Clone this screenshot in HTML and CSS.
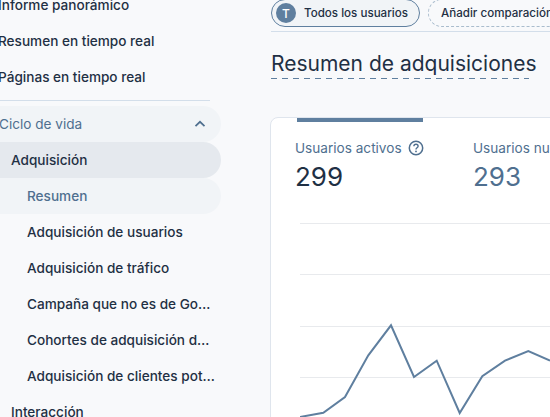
FILE: index.html
```html
<!DOCTYPE html>
<html lang="es">
<head>
<meta charset="utf-8">
<title>Resumen de adquisiciones</title>
<link rel="stylesheet" href="styles.css">
</head>
<body>
<div class="app">
  <nav class="sidebar">
    <div class="item top">Informe panorámico</div>
    <div class="item top">Resumen en tiempo real</div>
    <div class="item top">Páginas en tiempo real</div>
    <div class="divider"></div>
    <div class="item section"><span>Ciclo de vida</span>
      <svg class="chev" width="12" height="8" viewBox="0 0 12 8"><path d="M1.5 6.2 6 1.8l4.5 4.4" fill="none" stroke="#4f6f8f" stroke-width="1.7"/></svg>
    </div>
    <div class="item group active">Adquisición</div>
    <div class="item sub current">Resumen</div>
    <div class="item sub">Adquisición de usuarios</div>
    <div class="item sub">Adquisición de tráfico</div>
    <div class="item sub">Campaña que no es de Go…</div>
    <div class="item sub">Cohortes de adquisición d…</div>
    <div class="item sub">Adquisición de clientes pot…</div>
    <div class="item group">Interacción</div>
  </nav>
  <main class="main">
    <header class="topbar">
      <div class="chip selected"><span class="avatar">T</span><span>Todos los usuarios</span></div>
      <div class="chip dashed">Añadir comparación</div>
    </header>
    <h1 class="title">Resumen de adquisiciones</h1>
    <section class="card">
      <div class="tabs">
        <div class="tab on">
          <div class="bar"></div>
          <div class="label">Usuarios activos
            <svg class="help" width="16" height="16" viewBox="0 0 16 16"><circle cx="8" cy="8" r="6.7" fill="none" stroke="#4f6f8f" stroke-width="1.5"/><path d="M5.9 6.3c0-1.2 1-2 2.1-2s2.1.8 2.1 1.9c0 1.5-2.1 1.6-2.1 3.2" fill="none" stroke="#4f6f8f" stroke-width="1.4"/><circle cx="8" cy="11.4" r=".9" fill="#4f6f8f"/></svg>
          </div>
          <div class="value">299</div>
        </div>
        <div class="tab">
          <div class="bar off"></div>
          <div class="label">Usuarios nuevos</div>
          <div class="value muted">293</div>
        </div>
      </div>
      <svg class="chart" width="250" height="195" viewBox="0 0 250 195">
        <g stroke="#e8eaed" stroke-width="1">
          <line x1="0" x2="250" y1="0.5" y2="0.5"/>
          <line x1="0" x2="250" y1="51.5" y2="51.5"/>
          <line x1="0" x2="250" y1="103.5" y2="103.5"/>
          <line x1="0" x2="250" y1="154.5" y2="154.5"/>
        </g>
        <polyline fill="none" stroke="#5f7f9f" stroke-width="2" points="0,194 23.3,189.7 45,174 68.3,132.3 91,102.3 114,154 136.7,137.7 159.7,190 182.3,153.3 205,137.7 228.3,128 250,137.7"/>
      </svg>
    </section>
  </main>
</div>
</body>
</html>
```
FILE: styles.css
```css
* { box-sizing: border-box; }
html, body { margin: 0; height: 100%; overflow: hidden; }
body { background: #f8f9fb; font-family: "Inter", "Liberation Sans", sans-serif; color: #1f3044; }
.app { display: flex; width: 550px; height: 417px; overflow: hidden; }
.sidebar { flex: 0 0 270px; width: 270px; margin-top: -13px; padding-right: 49px; }
.item { height: 36px; display: flex; align-items: center; font-size: 13.6px; font-weight: 500; white-space: nowrap; }
.top { margin-left: -2px; }
.divider { height: 1px; background: #d3deea; margin: 5px 11px 5px 0; }
.section { justify-content: space-between; background: #f1f4f7; border-radius: 0 18px 18px 0; padding: 0 15px 0 3px; margin-left: -4px; color: #4f6f8f; font-weight: 400; }
.group { padding-left: 11px; }
.active { background: #e5e9ee; border-radius: 0 18px 18px 0; }
.sub { padding-left: 27px; }
.current { background: #f1f4f7; border-radius: 0 18px 18px 0; color: #4f6f8f; }
.main { flex: 1 1 auto; min-width: 0; overflow: hidden; }
.topbar { height: 33px; display: flex; gap: 8px; align-items: flex-start; border-bottom: 1px solid #d3deea; margin: -1px 0 0 1px; }
.chip { flex: 0 0 auto; height: 28px; display: flex; align-items: center; font-size: 11.6px; font-weight: 500; white-space: nowrap; border-radius: 14px; }
.selected { width: 149px; gap: 8px; padding-left: 4px; border: 1px solid #5f7f9f; background: #f1f4f7; }
.avatar { width: 20px; height: 20px; border-radius: 50%; background: #5f7f9f; color: #fff; display: flex; align-items: center; justify-content: center; font-size: 12px; }
.dashed { padding: 0 12px; border: 1px dashed #a9bccd; }
.title { margin: 19px 0 0 1px; width: 262px; height: 28px; font-size: 21px; line-height: 26px; font-weight: 400; white-space: nowrap; color: #1f3044; background: repeating-linear-gradient(to right, #5f7f9f 0 6px, transparent 6px 11px) left bottom / 258px 1px no-repeat; }
.card { margin-top: 38px; height: 320px; width: 300px; background: #fff; border: 1px solid #dfe5ed; border-radius: 8px 0 0 0; padding-left: 24px; }
.tabs { display: flex; }
.tab { flex: 0 0 178px; height: 96px; white-space: nowrap; }
.bar { width: 126px; height: 4px; margin-left: 2px; background: #5f7f9f; }
.bar.off { background: transparent; }
.label { display: flex; align-items: center; gap: 6px; margin-top: 18px; height: 16px; font-size: 13.6px; font-weight: 400; color: #4f6f8f; }
.value { margin-top: 3px; font-size: 26px; line-height: 36px; color: #1f3044; }
.muted { color: #4f6f8f; }
.chart { display: block; margin: 9px 0 0 5px; }
```
